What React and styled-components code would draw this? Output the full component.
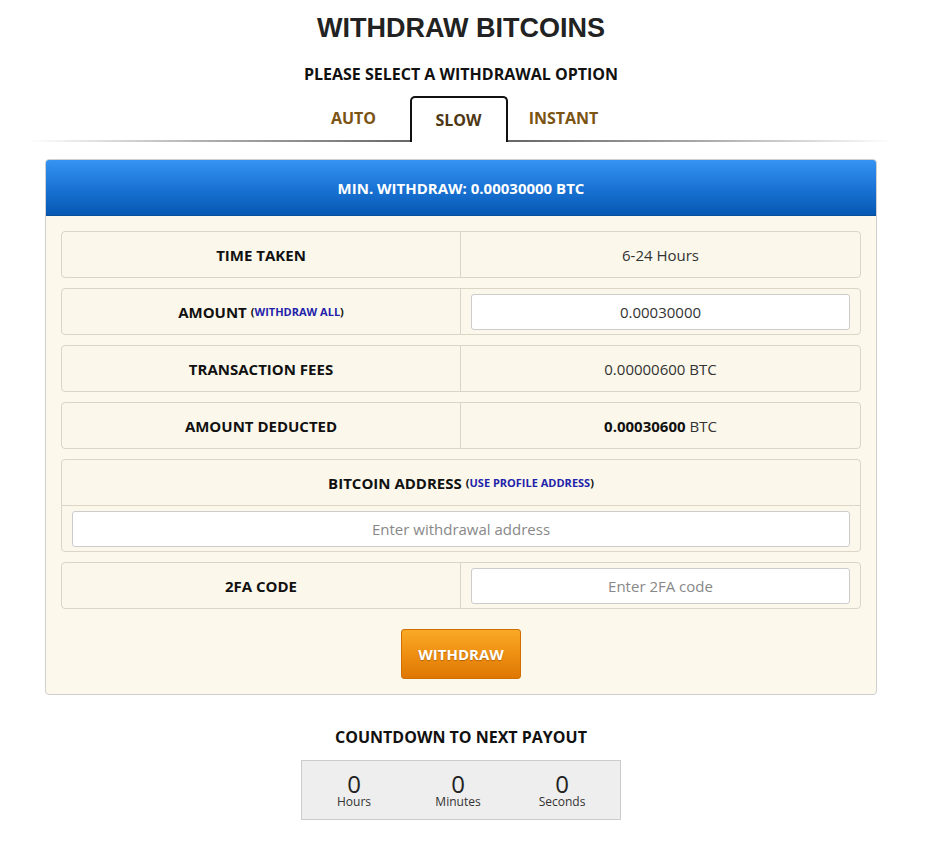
import React from 'react';
import styled, { createGlobalStyle } from 'styled-components';

const GlobalStyle = createGlobalStyle`
    html, body {
        margin: 0;
        padding: 0;
        background: #fff;
    }
    body {
        font-family: "Open Sans", "Liberation Sans", Arial, sans-serif;
        color: #222;
    }
    * {
        box-sizing: border-box;
    }
`;

const Page = styled.div`
    width: 926px;
    padding: 12px 49px 40px 45px;
    display: flex;
    flex-direction: column;
    align-items: stretch;
`;

const Title = styled.h1`
    margin: 0;
    font-family: "Liberation Sans", Arial, sans-serif;
    font-size: 27px;
    line-height: 32px;
    font-weight: 700;
    color: #222;
    text-align: center;
`;

const Subtitle = styled.h3`
    margin: 20px 0 0;
    font-size: 16px;
    line-height: 20px;
    font-weight: 700;
    color: #111;
    text-align: center;
`;

const TabBar = styled.div`
    margin: 12px -17px 0;
    padding-right: 5px;
    display: flex;
    justify-content: center;
    gap: 7px;
    background: linear-gradient(to right, rgba(120, 120, 120, 0) 0%, #aaa 22%, #555 50%, #aaa 78%, rgba(120, 120, 120, 0) 100%) no-repeat left bottom / 100% 2px;
`;

const Tab = styled.div`
    width: 98px;
    height: 46px;
    padding-top: 12px;
    text-align: center;
    font-size: 16px;
    line-height: 20px;
    font-weight: 700;
    color: ${p => (p.$active ? '#4d3714' : '#7b5414')};
    background: ${p => (p.$active ? '#fff' : 'transparent')};
    border: ${p => (p.$active ? '2px solid #111' : 'none')};
    border-bottom: none;
    border-radius: 5px 5px 0 0;
    cursor: pointer;
`;

const Panel = styled.div`
    margin-top: 17px;
    border: 1px solid #cfcfcf;
    border-radius: 4px;
    background: #fcf9ec;
    overflow: hidden;
`;

const PanelHeader = styled.div`
    height: 56px;
    display: flex;
    align-items: center;
    justify-content: center;
    background: linear-gradient(to bottom, #3693f2 0%, #1a74d6 50%, #0658b2 100%);
    border-bottom: 1px solid #0a4f9c;
    color: #fff;
    font-size: 15px;
    font-weight: 700;
`;

const PanelBody = styled.div`
    padding: 15px;
    display: flex;
    flex-direction: column;
    gap: 10px;
`;

const Row = styled.div`
    display: grid;
    grid-template-columns: 399px 1fr;
    height: 47px;
    border: 1px solid #dad5c5;
    border-radius: 4px;
    background: #fbf8eb;
`;

const StackRow = styled.div`
    display: flex;
    flex-direction: column;
    border: 1px solid #dad5c5;
    border-radius: 4px;
    background: #fbf8eb;
`;

const Label = styled.div`
    display: flex;
    align-items: center;
    justify-content: center;
    font-size: 15px;
    font-weight: 700;
    color: #111;
    border-right: ${p => (p.$full ? 'none' : '1px solid #dad5c5')};
    border-bottom: ${p => (p.$full ? '1px solid #dad5c5' : 'none')};
    height: ${p => (p.$full ? '46px' : 'auto')};
`;

const Link = styled.span`
    margin-left: 4px;
    font-size: 11px;
    font-weight: 700;
    color: #111;

    a {
        color: #2222aa;
        text-decoration: none;
    }
`;

const Value = styled.div`
    display: flex;
    align-items: center;
    justify-content: center;
    padding: ${p => (p.$input ? '5px 10px 4px' : '0')};
    font-size: 15px;
    color: #333;

    b {
        color: #111;
        margin-right: 4px;
    }
`;

const Input = styled.input`
    width: 100%;
    height: 36px;
    border: 1px solid #ccc;
    border-radius: 3px;
    background: #fff;
    text-align: center;
    font-family: "Open Sans", "Liberation Sans", Arial, sans-serif;
    font-size: 15px;
    color: #333;
    outline: none;

    &::placeholder {
        color: #888;
    }
`;

const ButtonRow = styled.div`
    display: flex;
    justify-content: center;
    padding-top: 10px;
`;

const WithdrawButton = styled.button`
    width: 120px;
    height: 50px;
    border: 1px solid #cf6f02;
    border-radius: 3px;
    background: linear-gradient(to bottom, #f9a927 0%, #ef9012 50%, #de7703 100%);
    color: #fff;
    font-family: "Open Sans", "Liberation Sans", Arial, sans-serif;
    font-size: 15px;
    font-weight: 700;
    text-shadow: 0 1px 1px rgba(120, 60, 0, 0.5);
    cursor: pointer;
`;

const CountdownTitle = styled.h3`
    margin: 32px 0 0;
    text-align: center;
    font-size: 16px;
    line-height: 20px;
    font-weight: 700;
    color: #111;
`;

const Countdown = styled.div`
    align-self: center;
    width: 320px;
    height: 60px;
    margin-top: 13px;
    display: grid;
    grid-template-columns: repeat(3, 104px);
    background: #eee;
    border: 1px solid #ccc;
`;

const Unit = styled.div`
    display: flex;
    flex-direction: column;
    align-items: center;
    padding-top: 14px;
    color: #222;
`;

const Digit = styled.span`
    font-size: 24px;
    line-height: 18px;
`;

const UnitLabel = styled.span`
    margin-top: 2px;
    font-size: 12px;
    line-height: 14px;
    color: #333;
`;

const rows = [
    { label: 'TIME TAKEN', value: '6-24 Hours' },
    { label: 'AMOUNT', link: 'WITHDRAW ALL', input: '0.00030000' },
    { label: 'TRANSACTION FEES', value: '0.00000600 BTC' },
    { label: 'AMOUNT DEDUCTED', bold: '0.00030600', value: 'BTC' },
];

export default class App extends React.Component {
    render() {
        return (
            <Page>
                <GlobalStyle />
                <Title>WITHDRAW BITCOINS</Title>
                <Subtitle>PLEASE SELECT A WITHDRAWAL OPTION</Subtitle>
                <TabBar>
                    <Tab>AUTO</Tab>
                    <Tab $active>SLOW</Tab>
                    <Tab>INSTANT</Tab>
                </TabBar>

                <Panel>
                    <PanelHeader>MIN. WITHDRAW: 0.00030000 BTC</PanelHeader>
                    <PanelBody>
                        {rows.map(r => (
                            <Row key={r.label}>
                                <Label>
                                    {r.label}
                                    {r.link && <Link>(<a href="#">{r.link}</a>)</Link>}
                                </Label>
                                {r.input ? (
                                    <Value $input><Input defaultValue={r.input} /></Value>
                                ) : (
                                    <Value>{r.bold && <b>{r.bold}</b>}{r.value}</Value>
                                )}
                            </Row>
                        ))}
                        <StackRow>
                            <Label $full>
                                BITCOIN ADDRESS
                                <Link>(<a href="#">USE PROFILE ADDRESS</a>)</Link>
                            </Label>
                            <Value $input><Input placeholder="Enter withdrawal address" /></Value>
                        </StackRow>
                        <Row>
                            <Label>2FA CODE</Label>
                            <Value $input><Input placeholder="Enter 2FA code" /></Value>
                        </Row>
                        <ButtonRow>
                            <WithdrawButton>WITHDRAW</WithdrawButton>
                        </ButtonRow>
                    </PanelBody>
                </Panel>

                <CountdownTitle>COUNTDOWN TO NEXT PAYOUT</CountdownTitle>
                <Countdown>
                    <Unit><Digit>0</Digit><UnitLabel>Hours</UnitLabel></Unit>
                    <Unit><Digit>0</Digit><UnitLabel>Minutes</UnitLabel></Unit>
                    <Unit><Digit>0</Digit><UnitLabel>Seconds</UnitLabel></Unit>
                </Countdown>
            </Page>
        );
    }
}
